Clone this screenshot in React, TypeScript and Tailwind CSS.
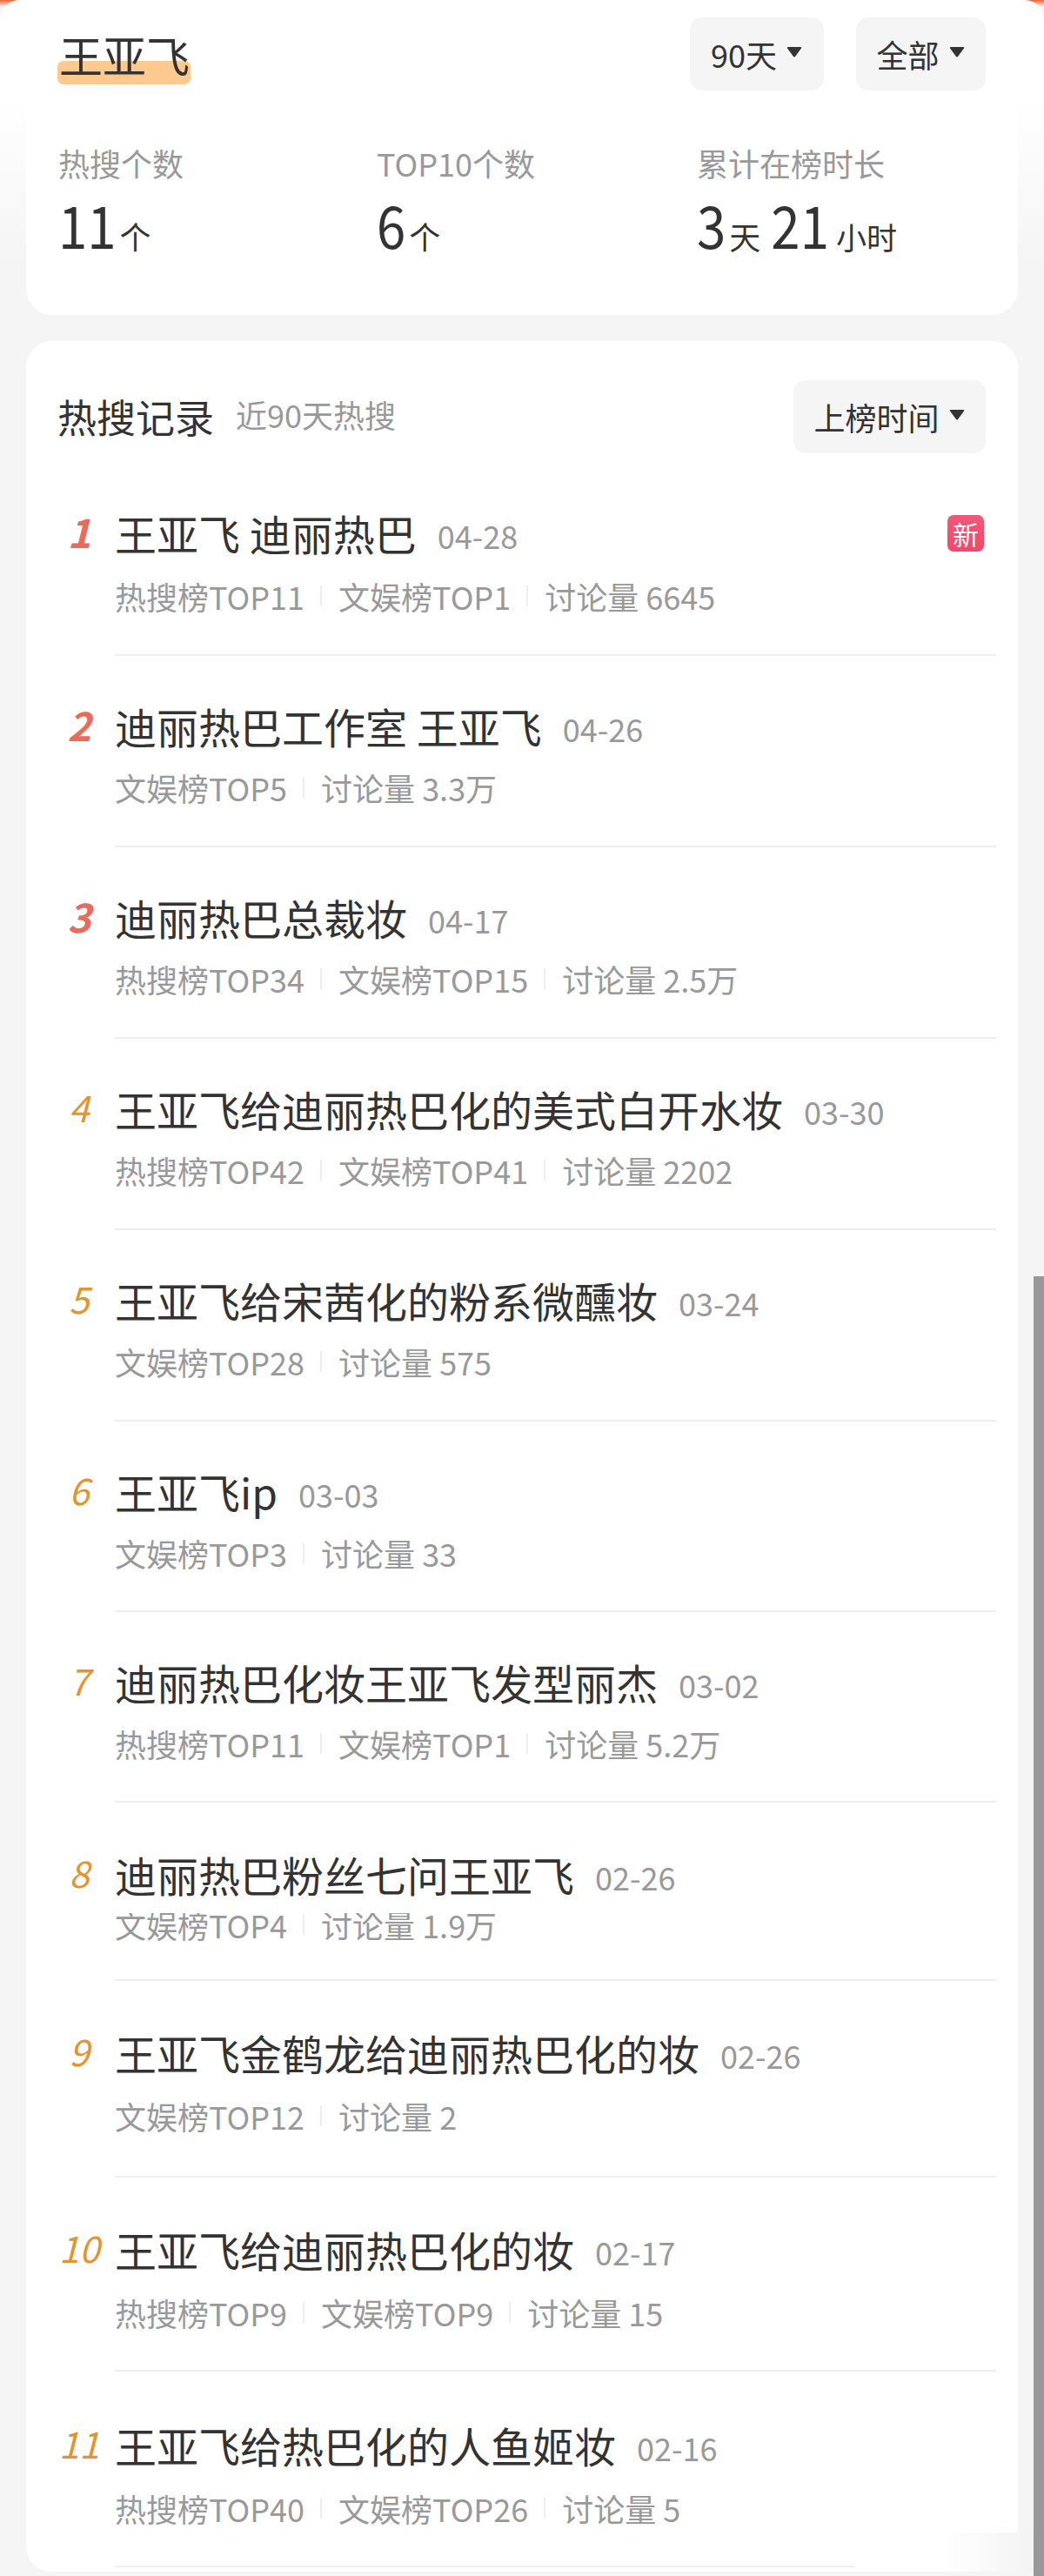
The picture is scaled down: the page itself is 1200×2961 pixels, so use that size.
const rows = [
  { rank: 1, title: "王亚飞 迪丽热巴", date: "04-28", tags: ["热搜榜TOP11", "文娱榜TOP1", "讨论量 6645"], isNew: true, box: "h-[221px] pt-[49px]", gap: "mt-[16px]" },
  { rank: 2, title: "迪丽热巴工作室 王亚飞", date: "04-26", tags: ["文娱榜TOP5", "讨论量 3.3万"], box: "h-[220px] pt-[50px]", gap: "mt-[14px]" },
  { rank: 3, title: "迪丽热巴总裁妆", date: "04-17", tags: ["热搜榜TOP34", "文娱榜TOP15", "讨论量 2.5万"], box: "h-[220px] pt-[50px]", gap: "mt-[14px]" },
  { rank: 4, title: "王亚飞给迪丽热巴化的美式白开水妆", date: "03-30", tags: ["热搜榜TOP42", "文娱榜TOP41", "讨论量 2202"], box: "h-[220px] pt-[50px]", gap: "mt-[14px]" },
  { rank: 5, title: "王亚飞给宋茜化的粉系微醺妆", date: "03-24", tags: ["文娱榜TOP28", "讨论量 575"], box: "h-[220px] pt-[50px]", gap: "mt-[14px]" },
  { rank: 6, title: "王亚飞ip", date: "03-03", tags: ["文娱榜TOP3", "讨论量 33"], box: "h-[219px] pt-[50px]", gap: "mt-[14px]" },
  { rank: 7, title: "迪丽热巴化妆王亚飞发型丽杰", date: "03-02", tags: ["热搜榜TOP11", "文娱榜TOP1", "讨论量 5.2万"], box: "h-[219px] pt-[50px]", gap: "mt-[14px]" },
  { rank: 8, title: "迪丽热巴粉丝七问王亚飞", date: "02-26", tags: ["文娱榜TOP4", "讨论量 1.9万"], box: "h-[205px] pt-[52px]", gap: "mt-[15px]", clipped: true },
  { rank: 9, title: "王亚飞金鹤龙给迪丽热巴化的妆", date: "02-26", tags: ["文娱榜TOP12", "讨论量 2"], box: "h-[226px] pt-[52px]", gap: "mt-[16px]" },
  { rank: 10, title: "王亚飞给迪丽热巴化的妆", date: "02-17", tags: ["热搜榜TOP9", "文娱榜TOP9", "讨论量 15"], box: "h-[223px] pt-[52px]", gap: "mt-[16px]" },
  { rank: 11, title: "王亚飞给热巴化的人鱼姬妆", date: "02-16", tags: ["热搜榜TOP40", "文娱榜TOP26", "讨论量 5"], box: "h-[225px] pt-[54px]", gap: "mt-[16px]" },
];

function Caret() {
  return (
    <svg width="20" height="14" viewBox="0 0 20 14" className="mb-[4px] ml-[10px]">
      <path d="M2 2.5 Q1 1 3 1 H17 Q19 1 18 2.5 L11 12 Q10 13 9 12 Z" fill="#333333" />
    </svg>
  );
}

function Dropdown({ label, width }: { label: string; width: string }) {
  return (
    <div className={`flex h-[84px] items-center justify-center rounded-[14px] bg-[#f5f5f5] text-[36px] text-[#333333] ${width}`}>
      {label}
      <Caret />
    </div>
  );
}

function Stat({ label, children }: { label: string; children: React.ReactNode }) {
  return (
    <div>
      <div className="h-[50px] text-[36px] leading-[50px] text-[#999999]">{label}</div>
      <div className="mt-[13px] flex h-[72px] items-baseline text-[36px] leading-[72px] text-[#333333]">{children}</div>
    </div>
  );
}

function BigNum({ value, className = "" }: { value: string; className?: string }) {
  return <span className={`inline-block origin-bottom scale-y-[1.12] text-[60px] ${className}`}>{value}</span>;
}

function TagLine({ tags }: { tags: string[] }) {
  return (
    <div className="flex h-[54px] items-center text-[36px] text-[#999999]">
      {tags.map((t, i) => (
        <div key={t} className="flex items-center">
          {i > 0 && <span className="ml-[18px] mr-[19px] h-[24px] w-[2px] bg-[#eeeeee]" />}
          {t}
        </div>
      ))}
    </div>
  );
}

function HotRow({ row }: { row: (typeof rows)[number] }) {
  const top3 = row.rank <= 3;
  return (
    <div className="flex">
      <div
        className={`ml-[20px] w-[82px] text-center leading-[56px] italic ${row.box} ${
          top3 ? "text-[46px] font-bold text-[#ea6b5b]" : "text-[42px] text-[#e2952f]"
        }`}
      >
        {row.rank}
      </div>
      <div className={`mr-[25px] flex-1 border-b-2 border-[#eeeeee] ${row.box}`}>
        <div className="flex h-[60px] items-center">
          <span className="text-[48px] leading-[60px] text-[#333333]">{row.title}</span>
          <span className="ml-[24px] mt-[6px] text-[36px] text-[#999999]">{row.date}</span>
          {row.isNew && (
            <span className="ml-auto mr-[14px] mt-[2px] flex h-[42px] w-[42px] items-center justify-center rounded-[7px] bg-gradient-to-b from-[#f0587a] to-[#f2476b] text-[30px] text-white">
              新
            </span>
          )}
        </div>
        {row.clipped ? (
          <div className={`${row.gap} h-[40px] overflow-hidden`}>
            <div className="-mt-[14px]">
              <TagLine tags={row.tags} />
            </div>
          </div>
        ) : (
          <div className={row.gap}>
            <TagLine tags={row.tags} />
          </div>
        )}
      </div>
    </div>
  );
}

export default function App() {
  return (
    <div className="relative h-[2961px] overflow-hidden bg-[#f5f5f5] font-['Noto_Sans_CJK_SC','Noto_Sans',sans-serif]">
      <div className="bg-[#f5f5f5] bg-gradient-to-b from-[#e8622a] from-0% to-[#f5f5f5] to-[2%]">
        <div className="rounded-t-[22px] bg-gradient-to-b from-white from-[110px] to-[#f5f5f5] to-[300px] px-[30px] pb-[30px]">
          <div className="h-[362px] rounded-b-[30px] bg-white pl-[38px] pr-[37px] pt-[20px]">
            <div className="flex items-start justify-between">
              <div className="relative mt-[12px]">
                <span className="absolute left-[-2px] top-[38px] h-[27px] w-[153px] rounded-[7px] bg-[#fdc98f]" />
                <span className="relative text-[50px] leading-[60px] text-[#333333]">王亚飞</span>
              </div>
              <div className="flex gap-[37px]">
                <Dropdown label="90天" width="w-[154px]" />
                <Dropdown label="全部" width="w-[149px]" />
              </div>
            </div>
            <div className="-ml-[1px] mt-[58px] grid grid-cols-[366px_368px_1fr]">
              <Stat label="热搜个数">
                <BigNum value="11" />
                <span className="ml-[4px]">个</span>
              </Stat>
              <Stat label="TOP10个数">
                <BigNum value="6" />
                <span className="ml-[4px]">个</span>
              </Stat>
              <Stat label="累计在榜时长">
                <BigNum value="3" />
                <span className="ml-[4px]">天</span>
                <BigNum value="21" className="ml-[12px]" />
                <span className="ml-[8px] text-[35px]">小时</span>
              </Stat>
            </div>
          </div>
        </div>
      </div>

      <div className="mx-[30px] h-[2564px] rounded-[30px] bg-white pt-[45px]">
        <div className="flex items-center justify-between pl-[36px] pr-[37px]">
          <div className="flex items-center">
            <span className="text-[45px] text-[#333333]">热搜记录</span>
            <span className="ml-[25px] mt-[-6px] text-[36px] text-[#999999]">近90天热搜</span>
          </div>
          <Dropdown label="上榜时间" width="w-[221px]" />
        </div>
        <div className="mt-[12px]">
          {rows.map((row) => (
            <HotRow key={row.rank} row={row} />
          ))}
        </div>
      </div>

      <div className="absolute left-[982px] top-[2911px] h-[45px] w-[206px] bg-gradient-to-r from-white via-white to-[#f3f3f3]" />
      <div className="absolute bottom-0 right-0 top-[1467px] w-[12px] bg-[#99999c]" />
    </div>
  );
}
